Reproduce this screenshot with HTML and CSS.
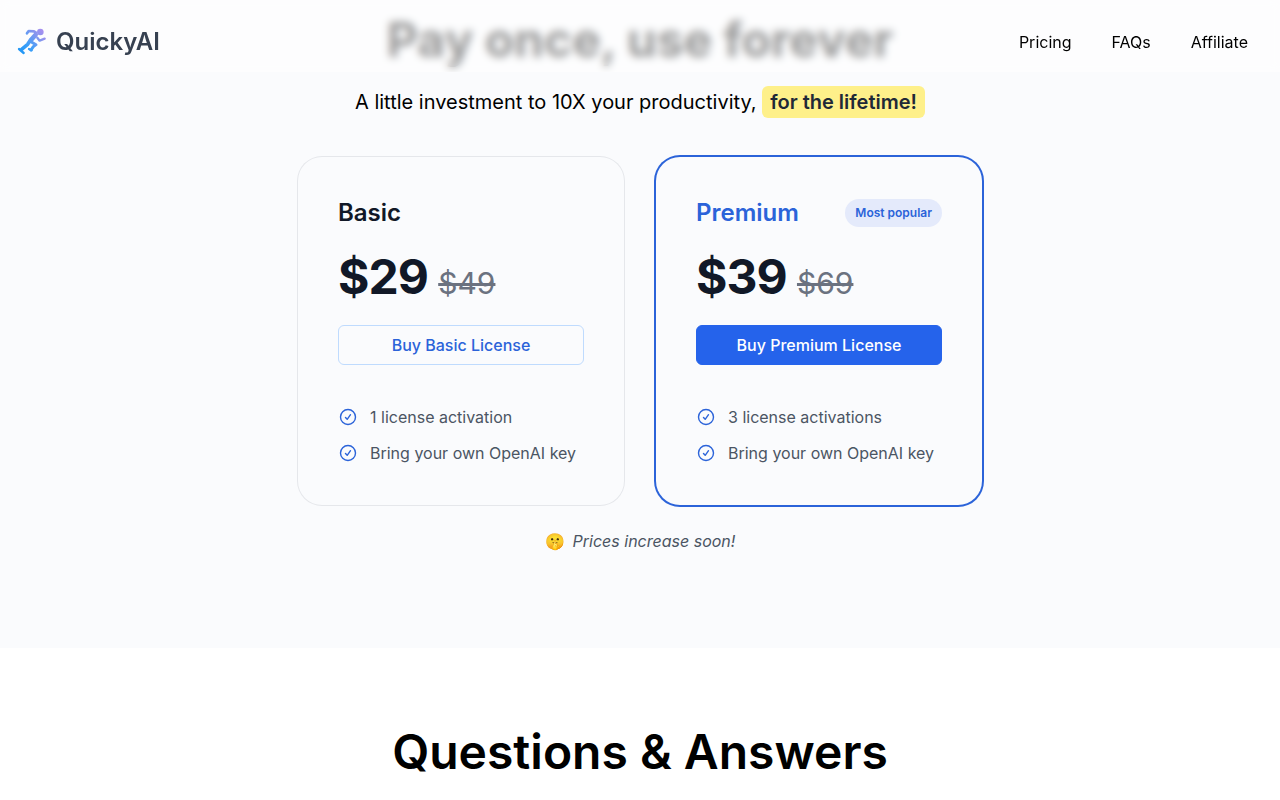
FILE: index.html
```html
<!DOCTYPE html>
<html lang="en">
<head>
  <meta charset="UTF-8" />
  <title>QuickyAI</title>
  <meta name="viewport" content="width=device-width, initial-scale=1.0" />
  <link rel="stylesheet" href="styles.css">
</head>
<body>
  <header class="header">
    <a class="logo" href="#">
      <svg class="logo-icon" viewBox="48 50 90 90" fill="none" stroke="url(#runner)" stroke-linecap="round" stroke-linejoin="round" aria-hidden="true">
        <defs>
          <linearGradient id="runner" gradientUnits="userSpaceOnUse" x1="58" y1="126" x2="134" y2="58">
            <stop offset="0" stop-color="#1e96f5" />
            <stop offset="0.35" stop-color="#3f9ff8" />
            <stop offset="0.7" stop-color="#8496ee" />
            <stop offset="1" stop-color="#b08df0" />
          </linearGradient>
        </defs>
        <circle cx="121" cy="65" r="10" fill="url(#runner)" stroke="none" />
        <path stroke-width="8" d="M81 69L86 62L102 63L108 67" />
        <path stroke-width="14" d="M107 73L93 89" />
        <path stroke-width="7" d="M112 82L119 91L134 85" />
        <path stroke-width="11" d="M91 90L83 102L65 117" />
        <path stroke-width="9" d="M93 94L108 103L100 109L93 119" />
        <path stroke-width="7" d="M57 116L71 128" />
        <path stroke-width="7" d="M87 116L95 120" />
      </svg>
      <span>QuickyAI</span>
    </a>
    <nav class="nav">
      <a href="#pricing">Pricing</a>
      <a href="#faqs">FAQs</a>
      <a href="#affiliate">Affiliate</a>
    </nav>
  </header>

  <main>
    <section class="pricing" id="pricing">
      <h2 class="pricing-title">Pay once, use forever</h2>
      <p class="subtitle">A little investment to 10X your productivity, <mark class="highlight">for the lifetime!</mark></p>

      <div class="plans">
        <div class="plan">
          <div class="plan-head">
            <h3>Basic</h3>
          </div>
          <p class="price">$29 <s>$49</s></p>
          <button class="buy" type="button">Buy Basic License</button>
          <ul class="features">
            <li>
              <svg class="check" viewBox="0 0 20 20" aria-hidden="true"><circle cx="10" cy="10" r="7.5" /><path d="M7.5 10.5l1.7 1.8 3.3-4.6" /></svg>
              1 license activation
            </li>
            <li>
              <svg class="check" viewBox="0 0 20 20" aria-hidden="true"><circle cx="10" cy="10" r="7.5" /><path d="M7.5 10.5l1.7 1.8 3.3-4.6" /></svg>
              Bring your own OpenAI key
            </li>
          </ul>
        </div>

        <div class="plan premium">
          <div class="plan-head">
            <h3>Premium</h3>
            <span class="badge">Most popular</span>
          </div>
          <p class="price">$39 <s>$69</s></p>
          <button class="buy" type="button">Buy Premium License</button>
          <ul class="features">
            <li>
              <svg class="check" viewBox="0 0 20 20" aria-hidden="true"><circle cx="10" cy="10" r="7.5" /><path d="M7.5 10.5l1.7 1.8 3.3-4.6" /></svg>
              3 license activations
            </li>
            <li>
              <svg class="check" viewBox="0 0 20 20" aria-hidden="true"><circle cx="10" cy="10" r="7.5" /><path d="M7.5 10.5l1.7 1.8 3.3-4.6" /></svg>
              Bring your own OpenAI key
            </li>
          </ul>
        </div>
      </div>

      <p class="notice"><span class="emoji">🤫</span> <em>Prices increase soon!</em></p>
    </section>

    <section class="faqs" id="faqs">
      <h2>Questions &amp; Answers</h2>
    </section>
  </main>
</body>
</html>
```
FILE: styles.css
```css
* {
  box-sizing: border-box;
}

body {
  margin: 0;
  font-family: Inter, sans-serif;
  font-size: 16px;
  line-height: 24px;
  color: #000;
  background: #fff;
}

h2, h3, p, ul {
  margin: 0;
  padding: 0;
}

a {
  color: inherit;
  text-decoration: none;
}

h2 {
  font-size: 48px;
  line-height: 48px;
  font-weight: 600;
  text-align: center;
}

/* stays on top while the page scrolls under it */
.header {
  position: fixed;
  top: 0;
  left: 0;
  right: 0;
  z-index: 10;
  padding: 24px 32px 12px 16px;
  height: 72px;
  display: flex;
  align-items: center;
  justify-content: space-between;
  background: rgba(255, 255, 255, 0.6);
  backdrop-filter: blur(4px);
}

.logo {
  display: flex;
  align-items: center;
  gap: 10px;
  font-size: 24px;
  line-height: 32px;
  font-weight: 600;
  color: #374151;
}

.logo-icon {
  width: 30px;
  height: 30px;
}

.nav {
  display: flex;
  gap: 40px;
}

.pricing {
  padding: 16px 16px 95px;
  background: #fafbfd;
}

.pricing-title {
  font-weight: 700;
}

.subtitle {
  margin-top: 24px;
  font-size: 20px;
  line-height: 28px;
  text-align: center;
}

.highlight {
  padding: 4px 8px;
  border-radius: 6px;
  background: #fef08a;
  color: #1f2937;
  font-weight: 600;
}

.plans {
  display: flex;
  flex-wrap: wrap;
  justify-content: center;
  gap: 32px;
  margin-top: 41px;
}

.plan {
  min-width: 326px;
  padding: 40px;
  border-radius: 24px;
  box-shadow: 0 0 0 1px #e5e7eb;
}

.plan.premium {
  box-shadow: 0 0 0 2px #2b63d9;
}

.plan-head {
  display: flex;
  align-items: center;
  justify-content: space-between;
}

.plan-head h3 {
  font-size: 24px;
  line-height: 32px;
  font-weight: 600;
  color: #111827;
}

.premium .plan-head h3 {
  color: #2b63d9;
}

.badge {
  padding: 4px 10px;
  border-radius: 14px;
  background: #e4eafb;
  color: #2b63d9;
  font-size: 12px;
  line-height: 20px;
  font-weight: 600;
}

.price {
  margin-top: 20px;
  font-size: 48px;
  line-height: 56px;
  font-weight: 700;
  letter-spacing: -1px;
  color: #111827;
}

.price s {
  font-size: 30px;
  line-height: 1;
  font-weight: 400;
  letter-spacing: 0;
  color: #6b7280;
}

.buy {
  display: block;
  width: 100%;
  height: 40px;
  margin-top: 20px;
  border: 1px solid #bfdbfe;
  border-radius: 6px;
  background: transparent;
  color: #2b63d9;
  font: inherit;
  font-weight: 500;
  cursor: pointer;
}

.premium .buy {
  border-color: #2563eb;
  background: #2563eb;
  color: #fff;
}

.features {
  display: flex;
  flex-direction: column;
  gap: 12px;
  margin-top: 40px;
  list-style: none;
  color: #4b5563;
}

.features li {
  display: flex;
  align-items: center;
  gap: 12px;
}

.check {
  width: 20px;
  height: 20px;
  fill: none;
  stroke: #2b63d9;
  stroke-width: 1.4;
  stroke-linecap: round;
  stroke-linejoin: round;
}

.notice {
  display: flex;
  justify-content: center;
  gap: 8px;
  margin-top: 24px;
  color: #4b5563;
}

.faqs {
  padding: 80px 16px 16px;
}
```
